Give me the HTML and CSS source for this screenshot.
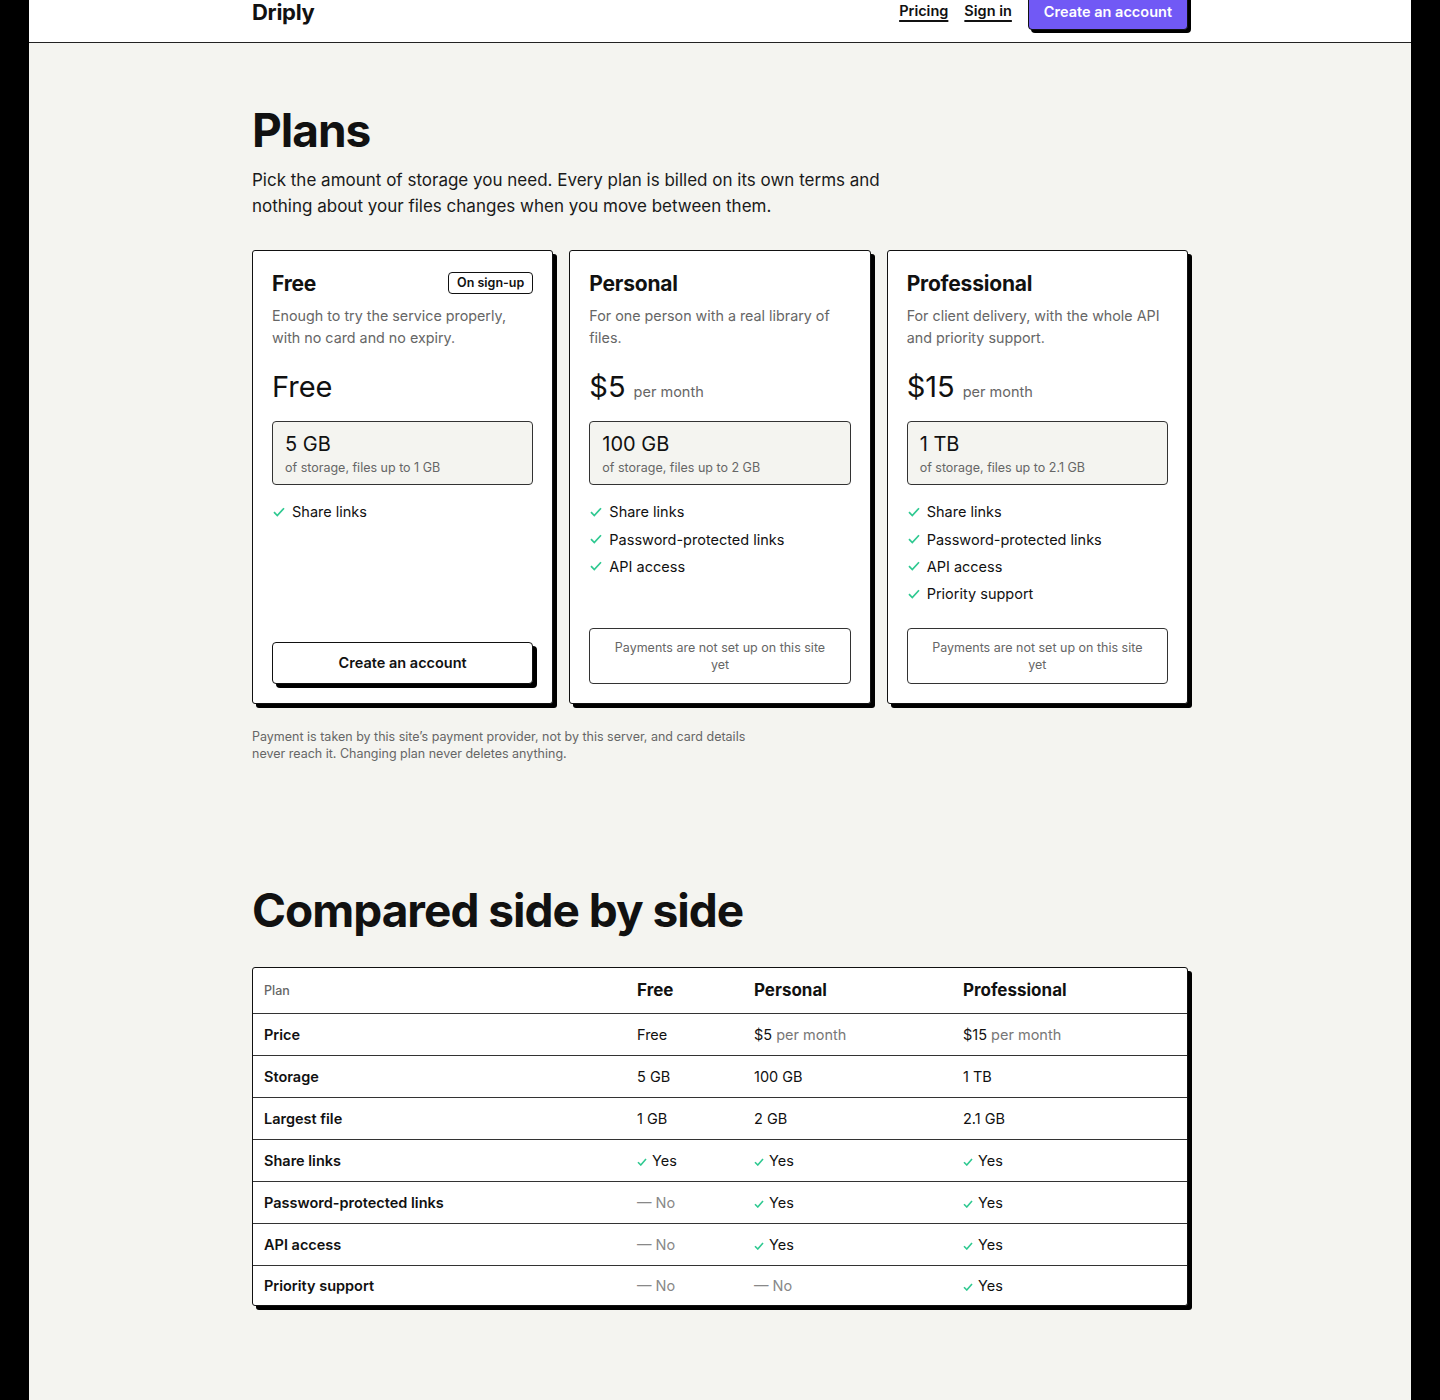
FILE: index.html
```html
<!DOCTYPE html>
<html lang="en">
<head>
    <meta charset="UTF-8">
    <meta name="viewport" content="width=device-width, initial-scale=1.0">
    <title>Driply — Plans</title>

    <link rel="stylesheet" href="styles.css">
</head>
<body>
    <div class="page">
        <header class="site-header">
            <div class="header-inner">
                <a class="logo" href="#">Driply</a>

                <nav class="nav">
                    <a class="nav-link" href="#">Pricing</a>
                    <a class="nav-link" href="#">Sign in</a>
                    <a class="btn btn-primary" href="#">Create an account</a>
                </nav>
            </div>
        </header>

        <main class="main">
            <section class="plans">
                <h1 class="page-title">Plans</h1>
                <p class="intro">Pick the amount of storage you need. Every plan is billed on its own terms and nothing about your files changes when you move between them.</p>

                <div class="plan-grid">
                    <div class="plan">
                        <div class="plan-head">
                            <h3 class="plan-name">Free</h3>
                            <span class="badge">On sign-up</span>
                        </div>
                        <p class="plan-desc">Enough to try the service properly, with no card and no expiry.</p>
                        <div class="plan-price">Free</div>

                        <div class="storage">
                            <div class="storage-size">5 GB</div>
                            <div class="storage-note">of storage, files up to 1 GB</div>
                        </div>

                        <ul class="features">
                            <li><svg class="check" viewBox="0 0 12 10"><polyline points="1,5.2 4.3,8.6 11,1.2"/></svg>Share links</li>
                        </ul>

                        <a class="btn btn-card" href="#">Create an account</a>
                    </div>

                    <div class="plan">
                        <div class="plan-head">
                            <h3 class="plan-name">Personal</h3>
                        </div>
                        <p class="plan-desc">For one person with a real library of files.</p>
                        <div class="plan-price">$5 <span class="per">per month</span></div>

                        <div class="storage">
                            <div class="storage-size">100 GB</div>
                            <div class="storage-note">of storage, files up to 2 GB</div>
                        </div>

                        <ul class="features">
                            <li><svg class="check" viewBox="0 0 12 10"><polyline points="1,5.2 4.3,8.6 11,1.2"/></svg>Share links</li>
                            <li><svg class="check" viewBox="0 0 12 10"><polyline points="1,5.2 4.3,8.6 11,1.2"/></svg>Password-protected links</li>
                            <li><svg class="check" viewBox="0 0 12 10"><polyline points="1,5.2 4.3,8.6 11,1.2"/></svg>API access</li>
                        </ul>

                        <div class="plan-notice">Payments are not set up on this site yet</div>
                    </div>

                    <div class="plan">
                        <div class="plan-head">
                            <h3 class="plan-name">Professional</h3>
                        </div>
                        <p class="plan-desc">For client delivery, with the whole API and priority support.</p>
                        <div class="plan-price">$15 <span class="per">per month</span></div>

                        <div class="storage">
                            <div class="storage-size">1 TB</div>
                            <div class="storage-note">of storage, files up to 2.1 GB</div>
                        </div>

                        <ul class="features">
                            <li><svg class="check" viewBox="0 0 12 10"><polyline points="1,5.2 4.3,8.6 11,1.2"/></svg>Share links</li>
                            <li><svg class="check" viewBox="0 0 12 10"><polyline points="1,5.2 4.3,8.6 11,1.2"/></svg>Password-protected links</li>
                            <li><svg class="check" viewBox="0 0 12 10"><polyline points="1,5.2 4.3,8.6 11,1.2"/></svg>API access</li>
                            <li><svg class="check" viewBox="0 0 12 10"><polyline points="1,5.2 4.3,8.6 11,1.2"/></svg>Priority support</li>
                        </ul>

                        <div class="plan-notice">Payments are not set up on this site yet</div>
                    </div>
                </div>

                <p class="footnote">Payment is taken by this site’s payment provider, not by this server, and card details never reach it. Changing plan never deletes anything.</p>
            </section>

            <section class="compare">
                <h2 class="section-title">Compared side by side</h2>

                <div class="table-wrap">
                    <table class="compare-table">
                        <colgroup>
                            <col class="col-label">
                            <col class="col-free">
                            <col class="col-personal">
                            <col>
                        </colgroup>
                        <thead>
                            <tr>
                                <th class="th-plan">Plan</th>
                                <th>Free</th>
                                <th>Personal</th>
                                <th>Professional</th>
                            </tr>
                        </thead>
                        <tbody>
                            <tr>
                                <td class="row-label">Price</td>
                                <td>Free</td>
                                <td>$5 <span class="per">per month</span></td>
                                <td>$15 <span class="per">per month</span></td>
                            </tr>
                            <tr>
                                <td class="row-label">Storage</td>
                                <td>5 GB</td>
                                <td>100 GB</td>
                                <td>1 TB</td>
                            </tr>
                            <tr>
                                <td class="row-label">Largest file</td>
                                <td>1 GB</td>
                                <td>2 GB</td>
                                <td>2.1 GB</td>
                            </tr>
                            <tr>
                                <td class="row-label">Share links</td>
                                <td><svg class="check-sm" viewBox="0 0 10 8"><polyline points="1,4.2 3.8,7 9,1"/></svg>Yes</td>
                                <td><svg class="check-sm" viewBox="0 0 10 8"><polyline points="1,4.2 3.8,7 9,1"/></svg>Yes</td>
                                <td><svg class="check-sm" viewBox="0 0 10 8"><polyline points="1,4.2 3.8,7 9,1"/></svg>Yes</td>
                            </tr>
                            <tr>
                                <td class="row-label">Password-protected links</td>
                                <td class="no">— No</td>
                                <td><svg class="check-sm" viewBox="0 0 10 8"><polyline points="1,4.2 3.8,7 9,1"/></svg>Yes</td>
                                <td><svg class="check-sm" viewBox="0 0 10 8"><polyline points="1,4.2 3.8,7 9,1"/></svg>Yes</td>
                            </tr>
                            <tr>
                                <td class="row-label">API access</td>
                                <td class="no">— No</td>
                                <td><svg class="check-sm" viewBox="0 0 10 8"><polyline points="1,4.2 3.8,7 9,1"/></svg>Yes</td>
                                <td><svg class="check-sm" viewBox="0 0 10 8"><polyline points="1,4.2 3.8,7 9,1"/></svg>Yes</td>
                            </tr>
                            <tr>
                                <td class="row-label">Priority support</td>
                                <td class="no">— No</td>
                                <td class="no">— No</td>
                                <td><svg class="check-sm" viewBox="0 0 10 8"><polyline points="1,4.2 3.8,7 9,1"/></svg>Yes</td>
                            </tr>
                        </tbody>
                    </table>
                </div>
            </section>
        </main>
    </div>
</body>
</html>
```

FILE: styles.css
```css
html,
body {
    margin: 0;
    min-height: 100%;
    background-color: #000;
}

body {
    font-family: Inter, "Liberation Sans", Arial, sans-serif;
    color: #111;
}

.page {
    max-width: 1382px;
    min-height: 1400px;
    margin: 0 auto;

    background-color: #f4f4f0;
}

a {
    color: inherit;
    text-decoration: none;
}

/* header */

.site-header {
    height: 42px;
    overflow: hidden;

    background-color: #fff;
    border-bottom: 1px solid #222;
}

.header-inner {
    max-width: 936px;
    height: 52px;
    margin: -15px auto 0;

    display: flex;
    align-items: center;
    justify-content: space-between;
}

.logo {
    padding-top: 2px;

    font-size: 22px;
    font-weight: 700;
    line-height: 22px;
    letter-spacing: -0.3px;
}

.nav {
    display: flex;
    align-items: center;
    gap: 16px;
}

.nav-link {
    font-size: 14.5px;
    font-weight: 600;
    line-height: 18px;
    text-decoration: underline;
    text-decoration-thickness: 1.5px;
    text-underline-offset: 4px;
}

.btn {
    display: inline-flex;
    align-items: center;
    justify-content: center;
    box-sizing: border-box;

    border: 1px solid #111;
    border-radius: 4px;
    box-shadow: 3px 3px 0 #000;
}

.btn-primary {
    height: 38px;
    padding: 0 15px;

    font-size: 14.5px;
    font-weight: 600;
    color: #fff;
    background-color: #7159f5;
}

/* plans */

.main {
    max-width: 936px;
    margin: 0 auto;
    padding-bottom: 90px;
}

.page-title,
.section-title {
    margin: 0;

    font-size: 46px;
    font-weight: 700;
    letter-spacing: -1px;
    line-height: 54px;
}

.plans {
    padding-top: 60px;
}

.intro {
    max-width: 640px;
    margin: 10px 0 0;

    font-size: 17px;
    line-height: 26px;
    color: #1a1a1a;
}

.plan-grid {
    margin-top: 31px;

    display: grid;
    grid-template-columns: repeat(3, 1fr);
    gap: 16px;
}

.plan {
    padding: 19px 19px 19px;

    display: flex;
    flex-direction: column;

    background-color: #fff;
    border: 1px solid #111;
    border-radius: 3px;
    box-shadow: 4px 4px 0 #000;
}

.plan-head {
    display: flex;
    align-items: center;
    justify-content: space-between;
    min-height: 26px;
}

.plan-name {
    margin: 0;

    font-size: 21px;
    font-weight: 700;
    letter-spacing: -0.2px;
}

.badge {
    padding: 3px 8px;

    font-size: 12.5px;
    font-weight: 600;
    line-height: 14px;

    border: 1px solid #111;
    border-radius: 4px;
}

.plan-desc {
    margin: 9px 0 0;
    min-height: 44px;

    font-size: 14.3px;
    line-height: 22px;
    color: #666;
}

.plan-price {
    height: 36px;
    margin-top: 20px;

    display: flex;
    align-items: baseline;
    gap: 8px;

    font-size: 29px;
    line-height: 36px;
}

.plan-price .per {
    font-size: 14.5px;
    color: #666;
}

.per {
    color: #777;
}

.storage {
    margin-top: 16px;
    padding: 9px 12px 8px;

    background-color: #f4f4f0;
    border: 1px solid #333;
    border-radius: 4px;
}

.storage-size {
    font-size: 20px;
    line-height: 26px;
}

.storage-note {
    margin-top: 2px;

    font-size: 12.5px;
    line-height: 17px;
    color: #666;
}

.features {
    margin: 13px 0 20px;
    padding: 0;

    list-style: none;
}

.features li {
    display: flex;
    align-items: center;
    height: 27.4px;

    font-size: 14.5px;
}

.check {
    width: 12px;
    height: 10px;
    margin: 0 7px 0 1px;

    fill: none;
    stroke: #2fc991;
    stroke-width: 1.7;
}

.btn-card {
    height: 42px;
    margin-top: auto;

    font-size: 14.5px;
    font-weight: 600;
    background-color: #fff;
    box-shadow: 4px 4px 0 #000;
}

.plan-notice {
    margin-top: auto;
    padding: 10px 24px;

    font-size: 12.5px;
    line-height: 17px;
    text-align: center;
    color: #666;

    border: 1px solid #333;
    border-radius: 4px;
}

.footnote {
    max-width: 500px;
    margin: 24px 0 0;

    font-size: 12.5px;
    line-height: 17px;
    color: #666;
}

/* comparison */

.compare {
    padding-top: 121px;
}

.table-wrap {
    margin-top: 30px;
    overflow: hidden;

    background-color: #fff;
    border: 1px solid #111;
    border-radius: 3px;
    box-shadow: 4px 4px 0 #000;
}

.compare-table {
    width: 100%;

    border-collapse: collapse;
}

.col-label {
    width: 373px;
}

.col-free {
    width: 117px;
}

.col-personal {
    width: 209px;
}

.compare-table th,
.compare-table td {
    padding: 0 11px;

    text-align: left;
    font-size: 14.5px;
}

.compare-table th {
    height: 45px;

    font-size: 17px;
    font-weight: 700;
}

.compare-table th.th-plan {
    font-size: 12.5px;
    font-weight: 500;
    color: #666;
}

.compare-table td {
    height: 41px;

    border-top: 1px solid #333;
}

.compare-table tr:last-child td {
    height: 39px;
}

.row-label {
    font-weight: 600;
}

.check-sm {
    width: 10px;
    height: 8px;
    margin-right: 5px;

    fill: none;
    stroke: #2fc991;
    stroke-width: 1.6;
}

.no {
    color: #888;
}
```
